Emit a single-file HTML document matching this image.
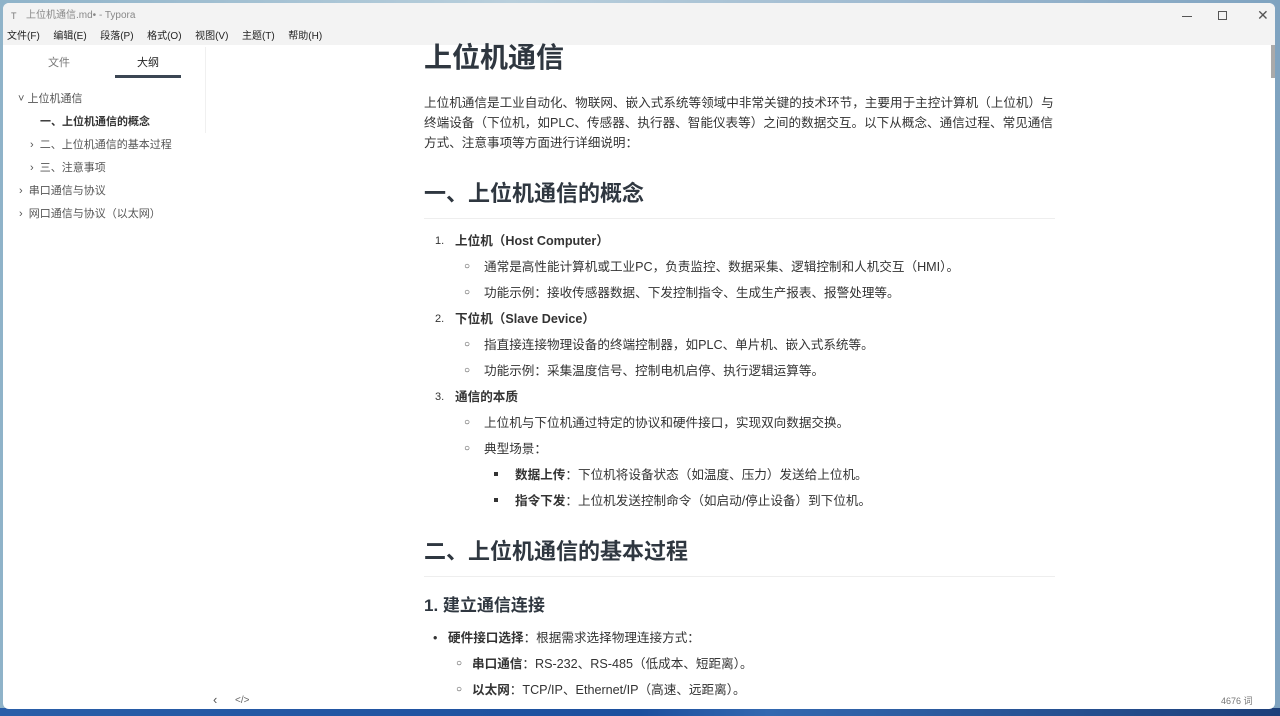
<!DOCTYPE html>
<html><head><meta charset="utf-8"><style>
*{margin:0;padding:0;box-sizing:border-box}
body{width:1280px;height:716px;overflow:hidden;background:#6f9fc4;font-family:"Liberation Sans","Noto Sans CJK SC",sans-serif;color:#333;position:relative}
.desk{position:absolute;left:0;top:0;width:1280px;height:716px;background:linear-gradient(90deg,#8fb3c9,#b9cfdc 40%,#9fbad0 70%,#7fa3c0)}
.deskb{position:absolute;left:0;top:708px;width:1280px;height:8px;background:linear-gradient(90deg,#2a5ea8,#1c4f9e 50%,#3368b0 60%,#1d3f7a)}
.win{position:absolute;left:3px;top:3px;width:1272px;height:706px;background:#fff;border-radius:6px;overflow:hidden}
.tb{position:absolute;left:0;top:0;width:100%;height:42px;background:#f3f3f3}
.a{position:absolute;white-space:nowrap;line-height:20px;font-size:12.6px}
.g{color:#555}
b{font-weight:bold;color:#333}
</style></head><body>
<div class="desk"></div><div class="deskb"></div>
<div class="win">
<div class="tb">
<div class="a" style="left:8px;top:3px;font-size:9px;color:#777">T</div>
<div class="a" style="left:23px;top:3px;font-size:10px;color:#888">上位机通信.md• - Typora</div>
<div class="a" style="left:4px;top:24px;font-size:10px;color:#222;word-spacing:4px">文件(F)&nbsp; 编辑(E)&nbsp; 段落(P)&nbsp; 格式(O)&nbsp; 视图(V)&nbsp; 主题(T)&nbsp; 帮助(H)</div>
<div style="position:absolute;left:1179px;top:13px;width:10px;height:1px;background:#555"></div>
<div style="position:absolute;left:1215px;top:8px;width:9px;height:9px;border:1px solid #555"></div>
<div class="a" style="left:1254px;top:2px;font-size:14px;color:#555">✕</div>
</div>
<div style="position:absolute;left:202px;top:44px;width:1px;height:86px;background:#f0f0f0"></div>
<div class="a g" style="left:45px;top:50px;font-size:11px;color:#777">文件</div>
<div class="a" style="left:134px;top:50px;font-size:11px;color:#222">大纲</div>
<div style="position:absolute;left:112px;top:72px;width:66px;height:3px;background:#3b4653"></div>
<div class="a g" style="left:15px;top:86px;font-size:11px">˅ 上位机通信</div>
<div class="a" style="left:37px;top:109px;font-size:11px;font-weight:bold;color:#333">一、上位机通信的概念</div>
<div class="a g" style="left:27px;top:132px;font-size:11px">›&nbsp; 二、上位机通信的基本过程</div>
<div class="a g" style="left:27px;top:155px;font-size:11px">›&nbsp; 三、注意事项</div>
<div class="a g" style="left:16px;top:178px;font-size:11px">›&nbsp; 串口通信与协议</div>
<div class="a g" style="left:16px;top:201px;font-size:11px">›&nbsp; 网口通信与协议（以太网）</div>
<div style="position:absolute;left:1268px;top:42px;width:5px;height:33px;background:#aaa"></div>
<div class="a" style="left:210px;top:687px;font-size:13px;color:#555">‹</div>
<div class="a" style="left:232px;top:688px;font-size:10px;color:#666">&lt;/&gt;</div>
<div class="a" style="left:1218px;top:688px;font-size:9px;color:#777">4676 词</div>
</div>
<div style="position:absolute;left:0;top:0">
<div class="a" style="left:424px;top:40px;font-size:28px;line-height:36px;font-weight:bold;color:#2f3740">上位机通信</div>
<div class="a" style="left:424px;top:93px">上位机通信是工业自动化、物联网、嵌入式系统等领域中非常关键的技术环节，主要用于主控计算机（上位机）与</div>
<div class="a" style="left:424px;top:113px">终端设备（下位机，如PLC、传感器、执行器、智能仪表等）之间的数据交互。以下从概念、通信过程、常见通信</div>
<div class="a" style="left:424px;top:133px">方式、注意事项等方面进行详细说明：</div>
<div class="a" style="left:424px;top:179px;font-size:22px;line-height:30px;font-weight:bold;color:#2f3740">一、上位机通信的概念</div>
<div style="position:absolute;left:424px;top:218px;width:631px;height:1px;background:#eee"></div>
<div class="a" style="left:435px;top:231px;font-size:11px">1.</div><div class="a" style="left:455px;top:231px"><b>上位机（Host Computer）</b></div>
<div class="a" style="left:464px;top:257px;font-size:10px">○</div><div class="a" style="left:484px;top:257px">通常是高性能计算机或工业PC，负责监控、数据采集、逻辑控制和人机交互（HMI）。</div>
<div class="a" style="left:464px;top:283px;font-size:10px">○</div><div class="a" style="left:484px;top:283px">功能示例：接收传感器数据、下发控制指令、生成生产报表、报警处理等。</div>
<div class="a" style="left:435px;top:309px;font-size:11px">2.</div><div class="a" style="left:455px;top:309px"><b>下位机（Slave Device）</b></div>
<div class="a" style="left:464px;top:335px;font-size:10px">○</div><div class="a" style="left:484px;top:335px">指直接连接物理设备的终端控制器，如PLC、单片机、嵌入式系统等。</div>
<div class="a" style="left:464px;top:361px;font-size:10px">○</div><div class="a" style="left:484px;top:361px">功能示例：采集温度信号、控制电机启停、执行逻辑运算等。</div>
<div class="a" style="left:435px;top:387px;font-size:11px">3.</div><div class="a" style="left:455px;top:387px"><b>通信的本质</b></div>
<div class="a" style="left:464px;top:413px;font-size:10px">○</div><div class="a" style="left:484px;top:413px">上位机与下位机通过特定的协议和硬件接口，实现双向数据交换。</div>
<div class="a" style="left:464px;top:439px;font-size:10px">○</div><div class="a" style="left:484px;top:439px">典型场景：</div>
<div style="position:absolute;left:494px;top:472px;width:4px;height:4px;background:#333"></div><div class="a" style="left:515px;top:465px"><b>数据上传</b>：下位机将设备状态（如温度、压力）发送给上位机。</div>
<div style="position:absolute;left:494px;top:498px;width:4px;height:4px;background:#333"></div><div class="a" style="left:515px;top:491px"><b>指令下发</b>：上位机发送控制命令（如启动/停止设备）到下位机。</div>
<div class="a" style="left:424px;top:537px;font-size:22px;line-height:30px;font-weight:bold;color:#2f3740">二、上位机通信的基本过程</div>
<div style="position:absolute;left:424px;top:576px;width:631px;height:1px;background:#eee"></div>
<div class="a" style="left:424px;top:594px;font-size:17px;line-height:24px;font-weight:bold;color:#2f3740">1. 建立通信连接</div>
<div class="a" style="left:433px;top:628px">•</div><div class="a" style="left:448px;top:628px"><b>硬件接口选择</b>：根据需求选择物理连接方式：</div>
<div class="a" style="left:456px;top:654px;font-size:10px">○</div><div class="a" style="left:472px;top:654px"><b>串口通信</b>：RS-232、RS-485（低成本、短距离）。</div>
<div class="a" style="left:456px;top:680px;font-size:10px">○</div><div class="a" style="left:472px;top:680px"><b>以太网</b>：TCP/IP、Ethernet/IP（高速、远距离）。</div>
</div>
</body></html>
